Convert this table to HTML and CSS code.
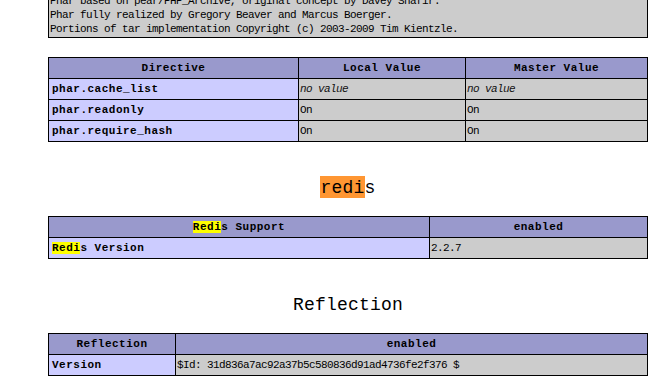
FILE: index.html
```html
<!DOCTYPE html>
<html>
<head>
<meta charset="utf-8">
<title>phpinfo()</title>
<link rel="stylesheet" href="styles.css">
</head>
<body>
<div class="page">
  <table class="tbl">
    <tr><td class="v credits">Phar based on pear/PHP_Archive, original concept by Davey Shafir.<br>Phar fully realized by Gregory Beaver and Marcus Boerger.<br>Portions of tar implementation Copyright (c) 2003-2009 Tim Kientzle.</td></tr>
  </table>

  <table class="tbl tbl-dir">
    <tr><th class="h w-dir">Directive</th><th class="h w-loc">Local Value</th><th class="h">Master Value</th></tr>
    <tr><td class="e">phar.cache_list</td><td class="v"><i>no value</i></td><td class="v"><i>no value</i></td></tr>
    <tr><td class="e">phar.readonly</td><td class="v">On</td><td class="v">On</td></tr>
    <tr><td class="e">phar.require_hash</td><td class="v">On</td><td class="v">On</td></tr>
  </table>

  <h2 class="sec-title"><span class="hl-active">redi</span>s</h2>
  <table class="tbl">
    <tr><th class="h w-redis"><span class="hl">Redi</span>s Support</th><th class="h">enabled</th></tr>
    <tr><td class="e"><span class="hl">Redi</span>s Version</td><td class="v">2.2.7</td></tr>
  </table>

  <h2 class="sec-title">Reflection</h2>
  <table class="tbl">
    <tr><th class="h w-refl">Reflection</th><th class="h">enabled</th></tr>
    <tr><td class="e">Version</td><td class="v">$Id: 31d836a7ac92a37b5c580836d91ad4736fe2f376 $</td></tr>
  </table>
</div>
</body>
</html>
```

FILE: styles.css
```css
html, body {
  margin: 0;
  padding: 0;
  background: #ffffff;
  color: #000000;
  font-family: "Liberation Mono", "DejaVu Sans Mono", monospace;
}

.page {
  width: 600px;
  margin: -8px 0 0 48px;
}

.tbl {
  width: 600px;
  table-layout: fixed;
  border-collapse: separate;
  border-spacing: 0;
  border-top: 1px solid #000;
  border-left: 1px solid #000;
}

.tbl-dir {
  margin-top: 19px;
  margin-bottom: 1px;
}

.tbl td,
.tbl th {
  box-sizing: border-box;
  border-right: 1px solid #000;
  border-bottom: 1px solid #000;
  padding: 1px 1px;
  font-size: 11px;
  line-height: 18px;
  vertical-align: middle;
  white-space: nowrap;
  overflow: hidden;
  text-align: left;
}

.w-dir { width: 250px; }
.w-loc { width: 167px; }
.w-redis { width: 381px; }
.w-refl { width: 127px; }

.tbl .h {
  background: #9999cc;
  font-weight: bold;
  text-align: center;
  letter-spacing: 0.5px;
}

.tbl .e {
  background: #ccccff;
  font-weight: bold;
  padding-left: 3px;
  letter-spacing: 0.5px;
}

.tbl .v {
  background: #cccccc;
  letter-spacing: -0.6px;
}

.tbl .credits {
  white-space: normal;
  line-height: 14px;
}

.v i {
  color: #111111;
}

.sec-title {
  margin: 36px 0 18px;
  font-size: 18px;
  line-height: 20px;
  font-weight: normal;
  text-align: center;
  letter-spacing: 0.2px;
}

.hl-active {
  background: #ff9632;
  padding-top: 2px;
}

.hl {
  background: #ffff00;
}
```
